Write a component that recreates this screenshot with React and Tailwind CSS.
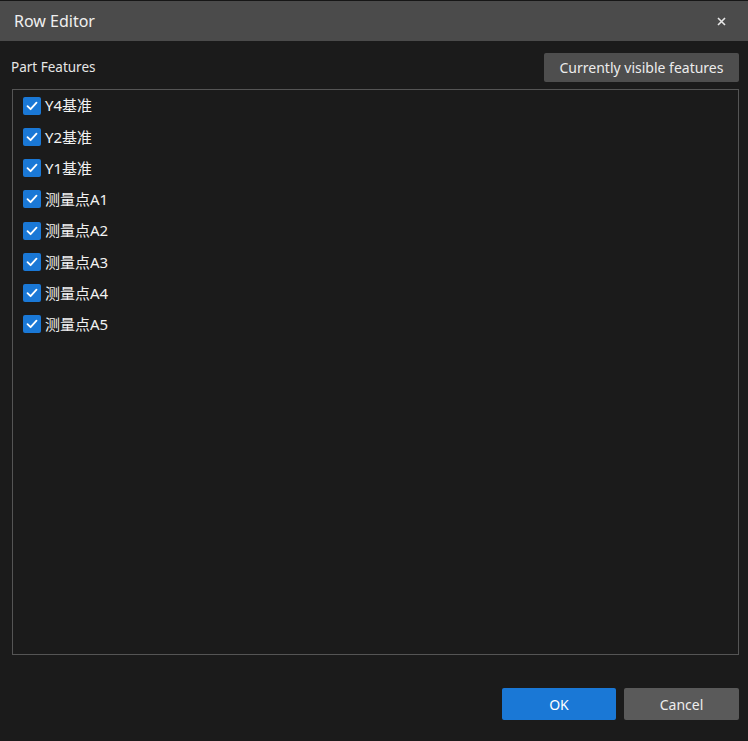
import React, { useState } from "react";

const FONT = { fontFamily: '"Noto Sans", "Noto Sans CJK SC", sans-serif' };

const initialItems = ["Y4基准", "Y2基准", "Y1基准", "测量点A1", "测量点A2", "测量点A3", "测量点A4", "测量点A5"];

const CheckBox = ({ checked }) => (
  <div
    className={
      checked
        ? "w-[18px] h-[18px] rounded-[2px] bg-[#1a78d6] flex items-center justify-center"
        : "w-[18px] h-[18px] rounded-[2px] border border-[#8a8a8a] bg-[#1b1b1b]"
    }
  >
    {checked && (
      <svg width="14" height="14" viewBox="0 0 14 14" fill="none">
        <path d="M2.5 7.2 L5.6 10.2 L11.5 3.6" stroke="white" strokeWidth="1.8" strokeLinecap="round" strokeLinejoin="round" />
      </svg>
    )}
  </div>
);

export default function App() {
  const [checked, setChecked] = useState(initialItems.map(() => true));

  const toggle = (i) => {
    const next = [...checked];
    next[i] = !next[i];
    setChecked(next);
  };

  return (
    <div className="w-[748px] h-[741px] bg-[#1b1b1b] flex flex-col text-[#e6e6e6]" style={FONT}>
      {/* title bar */}
      <div className="h-[41px] bg-[#4b4b4b] flex items-center justify-between pl-[14px] pr-[22px] border-t border-t-[#161616]">
        <span className="text-[16px] text-[#f0f0f0]">Row Editor</span>
        <svg width="9" height="9" viewBox="0 0 9 9">
          <path d="M1 1 L8 8 M8 1 L1 8" stroke="#e8e8e8" strokeWidth="1.6" />
        </svg>
      </div>

      <div className="flex-1 flex flex-col pl-[12px] pr-[9px]">
        <div className="flex items-center justify-between mt-[12px] h-[29px]">
          <span className="text-[13.5px] -ml-[1px]">Part Features</span>
          <button className="h-[29px] w-[195px] bg-[#4e4e4e] rounded-[2px] text-[14px] text-[#ececec]">
            Currently visible features
          </button>
        </div>

        <div className="mt-[7px] h-[566px] border border-[#555555] flex flex-col">
          {initialItems.map((item, i) => (
            <div
              key={item}
              className="h-[31.25px] flex items-center gap-[4px] pl-[10px] cursor-pointer"
              onClick={() => toggle(i)}
            >
              <CheckBox checked={checked[i]} />
              <span className="text-[15px] text-[#f2f2f2]">{item}</span>
            </div>
          ))}
        </div>

        <div className="flex justify-end gap-[8px] mt-[33px]">
          <button className="w-[114px] h-[32px] bg-[#1a78d6] rounded-[2px] text-[14px] text-white">OK</button>
          <button className="w-[115px] h-[32px] bg-[#5a5a5a] rounded-[2px] text-[14px] text-[#ededed]">Cancel</button>
        </div>
      </div>
    </div>
  );
}
